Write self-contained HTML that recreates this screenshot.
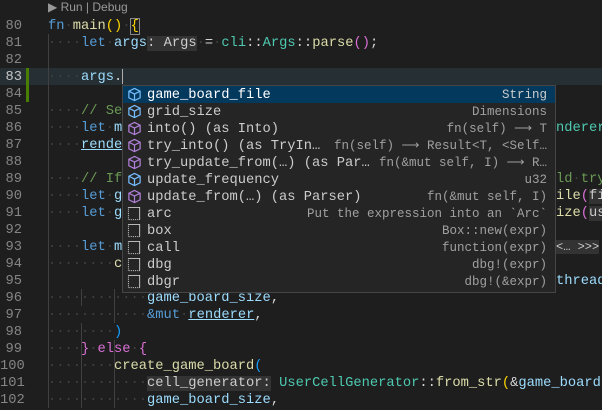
<!DOCTYPE html>
<html><head><meta charset="utf-8"><style>
body{margin:0;width:602px;height:408px;background:#1e1e1e;overflow:hidden;position:relative;font-family:"Liberation Mono",monospace;font-size:13.75px;}
.ln{position:absolute;left:0;width:22px;text-align:right;color:#858585;height:17px;line-height:19px}
.c{position:absolute;height:17px;line-height:19px;white-space:pre;color:#d4d4d4}
.d{color:#3f3f3f}.k{color:#569cd6}.v{color:#9cdcfe}.f{color:#dcdcaa}.t{color:#4ec9b0}.cm{color:#6a9955}.y{color:#ffd700}.p{color:#da70d6}.b{color:#179fff}
.h{background:#333;color:#ccc}
.u{text-decoration:underline;text-decoration-color:#9cdcfe}
#pop{position:absolute;left:122px;top:85px;width:432px;height:206px;background:#252526;border:1px solid #454545}
.r{position:absolute;left:0;width:432px;height:17px;line-height:19px;white-space:pre;color:#ccc}
.r .l{position:absolute;left:24px}
.r .det{position:absolute;right:8px;color:#a0a0a0;font-size:12.5px}
.r svg{position:absolute;left:4px;top:1px}
.sel{background:#04395e}
</style></head><body>
<div style="position:absolute;left:48px;top:0;height:17px;line-height:15px;font-family:'Liberation Sans',sans-serif;font-size:12px;color:#999">▶ Run | Debug</div>
<div style="position:absolute;left:0;top:68px;width:602px;height:17px;background:#262f33"></div>
<div style="position:absolute;left:26px;top:68px;width:3px;height:34px;background:#487e02"></div>
<div style="position:absolute;left:48px;top:34px;width:1px;height:374px;background:#404040"></div>
<div style="position:absolute;left:81px;top:289px;width:1px;height:17px;background:#404040"></div>
<div style="position:absolute;left:81px;top:323px;width:1px;height:85px;background:#404040"></div>
<div style="position:absolute;left:114px;top:340px;width:1px;height:68px;background:#404040"></div>
<div style="position:absolute;left:114px;top:289px;width:1px;height:34px;background:#404040"></div>

<div class="ln" style="top:17px">80</div><div class="ln" style="top:34px">81</div><div class="ln" style="top:51px">82</div><div class="ln" style="top:68px;color:#c6c6c6">83</div><div class="ln" style="top:85px">84</div><div class="ln" style="top:102px">85</div><div class="ln" style="top:119px">86</div><div class="ln" style="top:136px">87</div><div class="ln" style="top:153px">88</div><div class="ln" style="top:170px">89</div><div class="ln" style="top:187px">90</div><div class="ln" style="top:204px">91</div><div class="ln" style="top:221px">92</div><div class="ln" style="top:238px">93</div><div class="ln" style="top:255px">94</div><div class="ln" style="top:272px">95</div><div class="ln" style="top:289px">96</div><div class="ln" style="top:306px">97</div><div class="ln" style="top:323px">98</div><div class="ln" style="top:340px">99</div><div class="ln" style="top:357px">100</div><div class="ln" style="top:374px">101</div><div class="ln" style="top:391px">102</div>

<div class="c" style="left:48px;top:17px"><span class="k">fn</span><span class="d">·</span><span class="f">main</span><span class="y">()</span><span class="d">·</span><span class="y" style="outline:1px solid #888">{</span></div>
<div class="c" style="left:48px;top:34px"><span class="d">····</span><span class="k">let</span><span class="d">·</span><span class="v">args</span><span class="h">: Args</span><span class="d">·</span>=<span class="d">·</span><span class="t">cli</span>::<span class="t">Args</span>::<span class="f">parse</span><span class="p">()</span>;</div>
<div class="c" style="left:48px;top:68px"><span class="d">····</span><span class="v">args</span>.<span style="display:inline-block;width:1px;height:15px;background:#aeafad;vertical-align:middle"></span></div>
<div class="c" style="left:48px;top:102px"><span class="d">····</span><span class="cm">// Se</span></div>
<div class="c" style="left:48px;top:119px"><span class="d">····</span><span class="k">let</span><span class="d">·</span><span class="v">m</span></div>
<div class="c" style="left:48px;top:136px"><span class="d">····</span><span class="v u">rende</span></div>
<div class="c" style="left:48px;top:170px"><span class="d">····</span><span class="cm">// If</span></div>
<div class="c" style="left:48px;top:187px"><span class="d">····</span><span class="k">let</span><span class="d">·</span><span class="v">g</span></div>
<div class="c" style="left:48px;top:204px"><span class="d">····</span><span class="k">let</span><span class="d">·</span><span class="v">g</span></div>
<div class="c" style="left:48px;top:238px"><span class="d">····</span><span class="k">let</span><span class="d">·</span><span class="v">m</span></div>
<div class="c" style="left:48px;top:255px"><span class="d">········</span><span class="f">c</span></div>
<div class="c" style="left:48px;top:289px"><span class="d">············</span><span class="v">game_board_size</span>,</div>
<div class="c" style="left:48px;top:306px"><span class="d">············</span><span class="k">&amp;mut</span><span class="d">·</span><span class="v u">renderer</span>,</div>
<div class="c" style="left:48px;top:323px"><span class="d">········</span><span class="b">)</span></div>
<div class="c" style="left:48px;top:340px"><span class="d">····</span><span class="p">}</span><span class="d">·</span><span class="p">else</span><span class="d">·</span><span class="p">{</span></div>
<div class="c" style="left:48px;top:357px"><span class="d">········</span><span class="f">create_game_board</span><span class="b">(</span></div>
<div class="c" style="left:48px;top:374px"><span class="d">············</span><span class="h">cell_generator:</span> <span class="t">UserCellGenerator</span>::<span class="f">from_str</span><span class="y">(</span>&amp;<span class="v">game_board</span></div>
<div class="c" style="left:48px;top:391px"><span class="d">············</span><span class="v">game_board_size</span>,</div>

<div class="c" style="left:556px;top:119px"><span class="t">nderer</span></div>
<div class="c" style="left:556px;top:170px"><span class="cm">ld</span><span class="d">·</span><span class="cm">try</span></div>
<div class="c" style="left:556px;top:187px"><span class="f">ile</span><span class="p">(</span><span class="h">fi</span></div>
<div class="c" style="left:556px;top:204px"><span class="f">ize</span><span class="p">(</span><span class="h">us</span></div>
<div class="c" style="left:556px;top:238px"><span class="h" style="font-size:12px">&lt;… &gt;&gt;&gt;</span><span class="d">·</span></div>
<div class="c" style="left:556px;top:272px"><span class="v">thread</span></div>

<div id="pop">
<div class="r sel" style="top:0"><svg width="15" height="15" viewBox="0 0 16 16" fill="none" stroke="#75beff" stroke-width="1.3"><path d="M8 1.5L14 4.5V11.5L8 14.5L2 11.5V4.5Z M2 4.5L8 7.5L14 4.5 M8 7.5V14.5"/></svg><span class="l" style="color:#fff">game_board_file</span><span class="det" style="color:#ccc">String</span></div>
<div class="r" style="top:17px"><svg width="15" height="15" viewBox="0 0 16 16" fill="none" stroke="#75beff" stroke-width="1.3"><path d="M8 1.5L14 4.5V11.5L8 14.5L2 11.5V4.5Z M2 4.5L8 7.5L14 4.5 M8 7.5V14.5"/></svg><span class="l">grid_size</span><span class="det">Dimensions</span></div>
<div class="r" style="top:34px"><svg width="15" height="15" viewBox="0 0 16 16" fill="none" stroke="#b180d7" stroke-width="1.3"><path d="M8 1.5L14 4.5V11.5L8 14.5L2 11.5V4.5Z M2 4.5L8 7.5L14 4.5 M8 7.5V14.5"/></svg><span class="l">into() (as Into)</span><span class="det">fn(self) ⟶ T</span></div>
<div class="r" style="top:51px"><svg width="15" height="15" viewBox="0 0 16 16" fill="none" stroke="#b180d7" stroke-width="1.3"><path d="M8 1.5L14 4.5V11.5L8 14.5L2 11.5V4.5Z M2 4.5L8 7.5L14 4.5 M8 7.5V14.5"/></svg><span class="l">try_into() (as TryIn…</span><span class="det">fn(self) ⟶ Result&lt;T, &lt;Self…</span></div>
<div class="r" style="top:68px"><svg width="15" height="15" viewBox="0 0 16 16" fill="none" stroke="#b180d7" stroke-width="1.3"><path d="M8 1.5L14 4.5V11.5L8 14.5L2 11.5V4.5Z M2 4.5L8 7.5L14 4.5 M8 7.5V14.5"/></svg><span class="l">try_update_from(…) (as Par…</span><span class="det">fn(&amp;mut self, I) ⟶ R…</span></div>
<div class="r" style="top:85px"><svg width="15" height="15" viewBox="0 0 16 16" fill="none" stroke="#75beff" stroke-width="1.3"><path d="M8 1.5L14 4.5V11.5L8 14.5L2 11.5V4.5Z M2 4.5L8 7.5L14 4.5 M8 7.5V14.5"/></svg><span class="l">update_frequency</span><span class="det">u32</span></div>
<div class="r" style="top:102px"><svg width="15" height="15" viewBox="0 0 16 16" fill="none" stroke="#b180d7" stroke-width="1.3"><path d="M8 1.5L14 4.5V11.5L8 14.5L2 11.5V4.5Z M2 4.5L8 7.5L14 4.5 M8 7.5V14.5"/></svg><span class="l">update_from(…) (as Parser)</span><span class="det">fn(&amp;mut self, I)</span></div>
<div class="r" style="top:119px"><svg width="15" height="15" viewBox="0 0 16 16" fill="none" stroke="#ccc" stroke-width="1"><path d="M1.5 1.5H13.5V14.5" /><path d="M1.5 1.5V14.5H13.5" stroke-dasharray="1 1"/></svg><span class="l">arc</span><span class="det">Put the expression into an `Arc`</span></div>
<div class="r" style="top:136px"><svg width="15" height="15" viewBox="0 0 16 16" fill="none" stroke="#ccc" stroke-width="1"><path d="M1.5 1.5H13.5V14.5" /><path d="M1.5 1.5V14.5H13.5" stroke-dasharray="1 1"/></svg><span class="l">box</span><span class="det">Box::new(expr)</span></div>
<div class="r" style="top:153px"><svg width="15" height="15" viewBox="0 0 16 16" fill="none" stroke="#ccc" stroke-width="1"><path d="M1.5 1.5H13.5V14.5" /><path d="M1.5 1.5V14.5H13.5" stroke-dasharray="1 1"/></svg><span class="l">call</span><span class="det">function(expr)</span></div>
<div class="r" style="top:170px"><svg width="15" height="15" viewBox="0 0 16 16" fill="none" stroke="#ccc" stroke-width="1"><path d="M1.5 1.5H13.5V14.5" /><path d="M1.5 1.5V14.5H13.5" stroke-dasharray="1 1"/></svg><span class="l">dbg</span><span class="det">dbg!(expr)</span></div>
<div class="r" style="top:187px"><svg width="15" height="15" viewBox="0 0 16 16" fill="none" stroke="#ccc" stroke-width="1"><path d="M1.5 1.5H13.5V14.5" /><path d="M1.5 1.5V14.5H13.5" stroke-dasharray="1 1"/></svg><span class="l">dbgr</span><span class="det">dbg!(&amp;expr)</span></div>
</div>
</body></html>
